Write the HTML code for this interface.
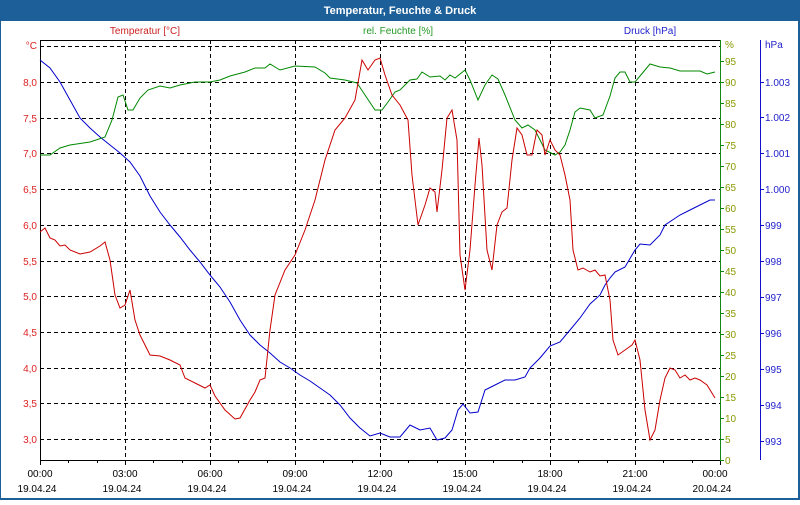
<!DOCTYPE html>
<html><head><meta charset="utf-8"><style>
html,body{margin:0;padding:0;background:#fff}
body{width:800px;height:500px;overflow:hidden;font-family:"Liberation Sans",sans-serif}
</style></head><body>
<svg width="800" height="500" xmlns="http://www.w3.org/2000/svg" font-family="Liberation Sans, sans-serif" font-size="10">
<rect x="0" y="0" width="800" height="500" fill="#1c5f99"/>
<rect x="1" y="21" width="797" height="477" fill="#fff"/>
<text x="400" y="14" fill="#fff" font-weight="bold" font-size="11" text-anchor="middle">Temperatur, Feuchte &amp; Druck</text>
<text x="145" y="34" fill="#cc2222" text-anchor="middle">Temperatur [°C]</text>
<text x="398" y="34" fill="#229922" text-anchor="middle">rel. Feuchte [%]</text>
<text x="650" y="34" fill="#2222cc" text-anchor="middle">Druck [hPa]</text>
<g stroke="#000" stroke-dasharray="4,3" stroke-width="1">
<line x1="40" y1="46.5" x2="720" y2="46.5"/><line x1="40" y1="82.5" x2="720" y2="82.5"/><line x1="40" y1="118.5" x2="720" y2="118.5"/><line x1="40" y1="153.5" x2="720" y2="153.5"/><line x1="40" y1="189.5" x2="720" y2="189.5"/><line x1="40" y1="225.5" x2="720" y2="225.5"/><line x1="40" y1="261.5" x2="720" y2="261.5"/><line x1="40" y1="296.5" x2="720" y2="296.5"/><line x1="40" y1="332.5" x2="720" y2="332.5"/><line x1="40" y1="368.5" x2="720" y2="368.5"/><line x1="40" y1="403.5" x2="720" y2="403.5"/><line x1="40" y1="439.5" x2="720" y2="439.5"/>
<line x1="125.5" y1="40" x2="125.5" y2="460"/><line x1="210.5" y1="40" x2="210.5" y2="460"/><line x1="295.5" y1="40" x2="295.5" y2="460"/><line x1="380.5" y1="40" x2="380.5" y2="460"/><line x1="465.5" y1="40" x2="465.5" y2="460"/><line x1="550.5" y1="40" x2="550.5" y2="460"/><line x1="635.5" y1="40" x2="635.5" y2="460"/>
</g>
<g stroke="#000" fill="none"><path d="M40.5 460V40.5H720"/><path d="M40 460.5H720"/>
<path d="M40.5 460v5M68.5 460v3M97.5 460v3M125.5 460v5M153.5 460v3M182.5 460v3M210.5 460v5M238.5 460v3M267.5 460v3M295.5 460v5M323.5 460v3M352.5 460v3M380.5 460v5M408.5 460v3M437.5 460v3M465.5 460v5M493.5 460v3M522.5 460v3M550.5 460v5M578.5 460v3M607.5 460v3M635.5 460v5M663.5 460v3M692.5 460v3M720.5 460v5"/></g>
<line x1="720.5" y1="40" x2="720.5" y2="461" stroke="#118811"/>
<path d="M720 460.5h4M720 439.5h4M720 418.5h4M720 397.5h4M720 376.5h4M720 355.5h4M720 334.5h4M720 313.5h4M720 292.5h4M720 271.5h4M720 250.5h4M720 229.5h4M720 208.5h4M720 187.5h4M720 166.5h4M720 145.5h4M720 124.5h4M720 103.5h4M720 82.5h4M720 61.5h4" stroke="#118811"/>
<line x1="760.5" y1="40" x2="760.5" y2="460" stroke="#1111cc"/>
<path d="M760 82.5h4M760 117.5h4M760 153.5h4M760 189.5h4M760 225.5h4M760 261.5h4M760 297.5h4M760 333.5h4M760 369.5h4M760 405.5h4M760 441.5h4" stroke="#1111cc"/>
<g fill="#dd2222" text-anchor="end">
<text x="37" y="49">°C</text><text x="37" y="86">8,0</text><text x="37" y="122">7,5</text><text x="37" y="157">7,0</text><text x="37" y="193">6,5</text><text x="37" y="229">6,0</text><text x="37" y="265">5,5</text><text x="37" y="300">5,0</text><text x="37" y="336">4,5</text><text x="37" y="372">4,0</text><text x="37" y="407">3,5</text><text x="37" y="443">3,0</text>
</g>
<g fill="#889900">
<text x="725" y="48">%</text><text x="725" y="65">95</text><text x="725" y="86">90</text><text x="725" y="107">85</text><text x="725" y="128">80</text><text x="725" y="149">75</text><text x="725" y="170">70</text><text x="725" y="191">65</text><text x="725" y="212">60</text><text x="725" y="233">55</text><text x="725" y="254">50</text><text x="725" y="275">45</text><text x="725" y="296">40</text><text x="725" y="317">35</text><text x="725" y="338">30</text><text x="725" y="359">25</text><text x="725" y="380">20</text><text x="725" y="401">15</text><text x="725" y="422">10</text><text x="725" y="443">5</text><text x="725" y="464">0</text>
</g>
<g fill="#2222cc">
<text x="765" y="48">hPa</text><text x="765" y="86">1.003</text><text x="765" y="121">1.002</text><text x="765" y="157">1.001</text><text x="765" y="193">1.000</text><text x="765" y="229">999</text><text x="765" y="265">998</text><text x="765" y="301">997</text><text x="765" y="337">996</text><text x="765" y="373">995</text><text x="765" y="409">994</text><text x="765" y="445">993</text>
</g>
<g fill="#000" text-anchor="middle">
<text x="40" y="477">00:00</text><text x="125" y="477">03:00</text><text x="210" y="477">06:00</text><text x="295" y="477">09:00</text><text x="380" y="477">12:00</text><text x="465" y="477">15:00</text><text x="550" y="477">18:00</text><text x="635" y="477">21:00</text><text x="715" y="477">00:00</text>
<text x="37" y="492">19.04.24</text><text x="122" y="492">19.04.24</text><text x="207" y="492">19.04.24</text><text x="292" y="492">19.04.24</text><text x="377" y="492">19.04.24</text><text x="462" y="492">19.04.24</text><text x="547" y="492">19.04.24</text><text x="632" y="492">19.04.24</text><text x="712" y="492">20.04.24</text>
</g>
<polyline fill="none" stroke="#0000cc" points="40,60 50,68 60,82 70,100 80,118 90,128 100,137 110,145 120,153 130,162 140,176 150,196 160,212 170,225 180,237 190,250 200,262 210,275 220,287 230,302 240,320 250,335 260,345 270,353 280,362 290,368 300,375 310,381 320,388 330,395 340,405 350,418 360,428 370,436 380,433 390,437 400,437 410,425 420,430 430,428 437,440 445,438 452,430 458,410 463,404 470,413 478,412 485,390 495,385 505,380 515,380 525,377 530,368 540,358 550,346 560,342 570,330 580,318 590,304 600,295 605,285 610,278 615,272 625,267 635,250 640,244 650,245 660,235 665,225 680,215 690,210 700,205 710,200 715,200"/>
<polyline fill="none" stroke="#008800" points="40,155 50,155 60,148 70,145 90,142 105,137 112,120 118,97 123,95 128,110 133,110 140,98 148,90 160,86 170,88 180,85 195,82 210,82 220,80 230,76 245,72 255,68 265,68 270,64 280,70 295,66 315,67 325,73 330,78 345,80 357,83 365,95 375,110 382,110 388,102 395,92 400,90 410,80 417,79 422,72 430,77 440,76 445,80 450,75 455,78 460,74 465,70 470,80 478,100 485,85 492,75 498,79 505,95 515,120 522,128 528,125 535,130 540,140 545,150 555,155 560,152 565,145 570,130 575,112 580,108 590,110 595,118 603,115 610,96 615,78 620,72 625,72 630,82 635,82 640,76 650,64 660,67 670,68 680,71 690,71 700,71 707,74 715,72"/>
<polyline fill="none" stroke="#cc0000" points="40,232 45,228 50,238 55,240 60,246 65,245 70,250 80,254 90,252 100,246 105,242 110,260 115,295 120,308 125,305 130,290 135,320 140,335 150,355 160,356 170,360 180,365 185,378 195,383 205,388 210,385 215,396 225,410 235,419 240,418 250,400 255,392 260,380 265,378 270,330 275,295 285,270 295,255 305,230 315,200 325,160 335,130 345,118 355,100 362,60 368,70 375,60 380,58 385,75 392,95 400,105 408,120 412,175 418,225 425,205 430,188 435,192 437,212 442,170 447,118 452,110 457,140 460,255 465,290 470,250 475,185 479,138 482,165 487,250 492,270 497,225 502,212 507,208 512,160 517,128 522,135 527,155 532,155 537,130 542,135 545,155 550,140 555,150 560,155 565,175 570,200 573,250 578,270 583,268 590,272 595,270 600,276 605,275 610,300 613,340 618,355 625,350 632,345 635,340 640,360 645,410 650,440 655,430 660,400 665,378 670,368 675,370 680,378 685,375 690,380 695,378 700,380 707,385 715,398"/>
</svg>
</body></html>
